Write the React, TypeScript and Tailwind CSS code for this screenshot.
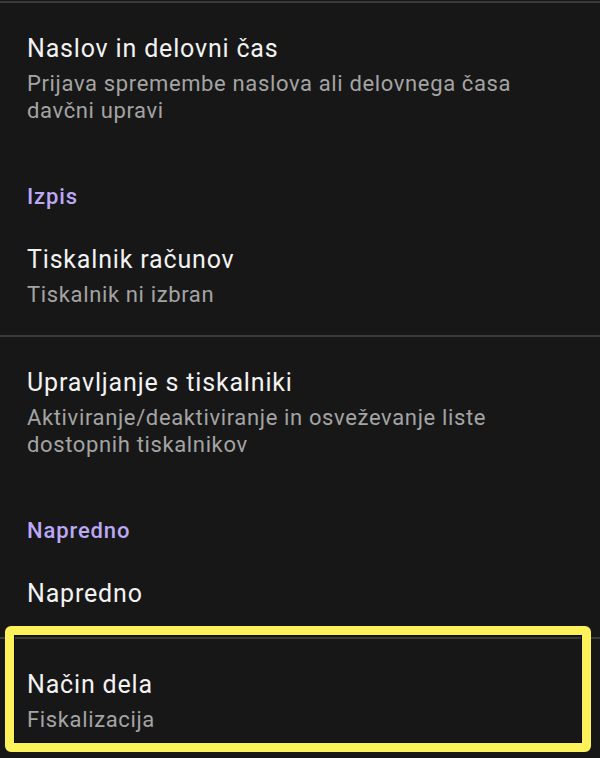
import { ReactNode } from 'react';

const font = { fontFamily: 'Roboto, "Noto Sans", sans-serif' };

function Divider() {
  return <div className="h-[2px] bg-[#3a3a3a]" />;
}

function Header({ children }: { children: ReactNode }) {
  return (
    <div className="pl-[27px] pt-8 pb-1 text-[22px] leading-[27px] font-medium tracking-[0.04em] text-[#bca8f5]">
      {children}
    </div>
  );
}

function Item({ title, summary }: { title: string; summary?: string }) {
  return (
    <div className="pl-[27px] pr-8 pt-[30px] pb-[27px]">
      <div className="text-[25px] leading-[32px] tracking-[0.033em] text-[#f2f2f2]">{title}</div>
      {summary && (
        <div className="mt-[5px] text-[22px] leading-[27px] tracking-[0.029em] text-[#a4a4a4]">
          {summary}
        </div>
      )}
    </div>
  );
}

export default function App() {
  return (
    <div className="relative h-[758px] w-[600px] overflow-hidden bg-[#171717]" style={font}>
      <div className="pt-px">
        <Divider />
        <Item
          title="Naslov in delovni čas"
          summary="Prijava spremembe naslova ali delovnega časa davčni upravi"
        />
        <Header>Izpis</Header>
        <Item title="Tiskalnik računov" summary="Tiskalnik ni izbran" />
        <Divider />
        <Item
          title="Upravljanje s tiskalniki"
          summary="Aktiviranje/deaktiviranje in osveževanje liste dostopnih tiskalnikov"
        />
        <Header>Napredno</Header>
        <Item title="Napredno" />
        <Divider />
        <Item title="Način dela" summary="Fiskalizacija" />
      </div>

      {/* highlight annotation */}
      <div className="absolute left-[5px] top-[626px] h-[126px] w-[586px] rounded-[6px] border-[9px] border-[#fef25b] shadow-[inset_0_0_0_1px_#0d0d0d]" />
    </div>
  );
}
